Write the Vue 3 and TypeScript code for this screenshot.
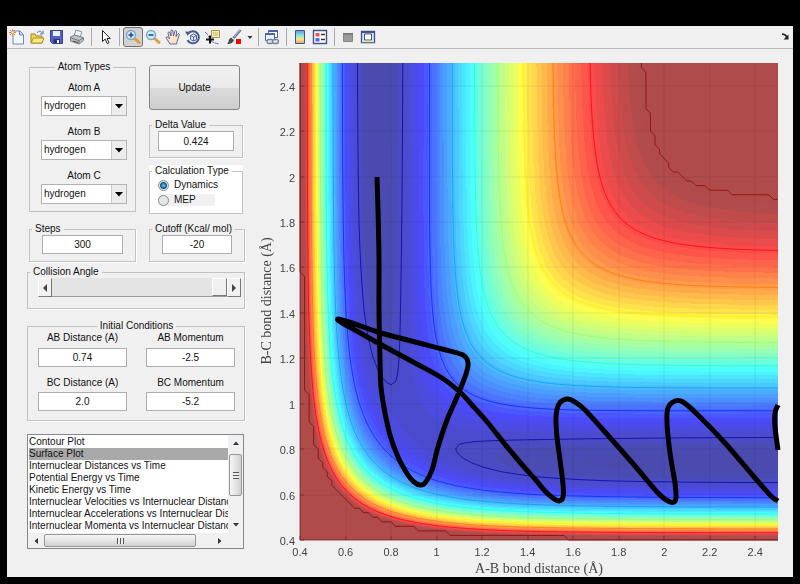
<script setup lang="ts">
import { computed, onMounted, ref } from 'vue'

type Point = [number, number]

const atoms = ref([
  { id: 'a', label: 'Atom A', value: 'hydrogen' },
  { id: 'b', label: 'Atom B', value: 'hydrogen' },
  { id: 'c', label: 'Atom C', value: 'hydrogen' },
])
const elements = ['hydrogen', 'deuterium', 'fluorine', 'chlorine']
const delta = ref('0.424')
const method = ref('dynamics')
const steps = ref('300')
const cutoff = ref('-20')
const angle = ref(180)
const initial = ref([
  { id: 'abd', label: 'AB Distance (A)', value: '0.74' },
  { id: 'abm', label: 'AB Momentum', value: '-2.5' },
  { id: 'bcd', label: 'BC Distance (A)', value: '2.0' },
  { id: 'bcm', label: 'BC Momentum', value: '-5.2' },
])
const plots = [
  'Contour Plot',
  'Surface Plot',
  'Internuclear Distances vs Time',
  'Potential Energy vs Time',
  'Kinetic Energy vs Time',
  'Internuclear Velocities vs Internuclear Distance',
  'Internuclear Accelerations vs Internuclear Distance',
  'Internuclear Momenta vs Internuclear Distance',
]
const plot = ref('Surface Plot')

// Collinear LEPS surface for H + H2, energies in kcal/mol
const DE = 109.5
const BETA = 1.96
const RE = 0.742
const SATO = 0.178
const LIMIT = -22

function pair(r: number): Point {
  const e = Math.exp(-BETA * (r - RE))
  const bonding = DE * (e * e - 2 * e)
  const anti = ((DE / 2) * (1 - SATO) * (e * e + 2 * e)) / (1 + SATO)
  return [(bonding + anti) / 2, (bonding - anti) / 2]
}
function energy(x: number, y: number): number {
  const [q1, j1] = pair(x)
  const [q2, j2] = pair(y)
  const [q3, j3] = pair(x + y)
  const ex = Math.sqrt(((j1 - j2) ** 2 + (j2 - j3) ** 2 + (j1 - j3) ** 2) / 2)
  return Math.min(LIMIT, q1 + q2 + q3 - ex)
}
function jet(v: number): number[] {
  const t = Math.min(0.985, Math.max(0.015, (v + DE) / (DE + LIMIT)))
  const ch = (c: number) => Math.min(1, Math.max(0, 1.5 - Math.abs(4 * t - c))) * 255
  return [ch(3), ch(2), ch(1)]
}

// Axes geometry inside the chart's view box
const LEFT = 44
const TOP = 14
const W = 478
const H = 477
const MIN = 0.4
const SPAN = 2.1
const px = (x: number) => LEFT + ((x - MIN) / SPAN) * W
const py = (y: number) => TOP + H - ((y - MIN) / SPAN) * H

const ticks = Array.from({ length: 11 }, (_, i) => Math.round((0.4 + i * 0.2) * 10) / 10)

const N = 105
const grid: number[][] = []
for (let j = 0; j <= N; j++) {
  const row: number[] = []
  for (let i = 0; i <= N; i++) row.push(energy(MIN + i * 0.02, MIN + j * 0.02))
  grid.push(row)
}

function contour(level: number): string {
  let d = ''
  for (let j = 0; j < N; j++) {
    for (let i = 0; i < N; i++) {
      const c: [number, number, number][] = [
        [i, j, grid[j][i]],
        [i + 1, j, grid[j][i + 1]],
        [i + 1, j + 1, grid[j + 1][i + 1]],
        [i, j + 1, grid[j + 1][i]],
      ]
      const hits: string[] = []
      for (let k = 0; k < 4; k++) {
        const a = c[k]
        const b = c[(k + 1) % 4]
        if (a[2] > level === b[2] > level) continue
        const t = (level - a[2]) / (b[2] - a[2])
        const x = px(MIN + (a[0] + t * (b[0] - a[0])) * 0.02)
        const y = py(MIN + (a[1] + t * (b[1] - a[1])) * 0.02)
        hits.push(x.toFixed(2) + ' ' + y.toFixed(2))
      }
      for (let k = 0; k + 1 < hits.length; k += 2) d += 'M' + hits[k] + 'L' + hits[k + 1]
    }
  }
  return d
}

const levels = [-105.3, -95.3, -84.9, -74.5, -64.1, -53.6, -43.2, -32.6, LIMIT - 0.001]
const contours = computed(() =>
  levels.map((v) => ({ d: contour(v), color: 'rgb(' + jet(v).map(Math.round).join(',') + ')' })),
)

const track: Point[] = [
  [121, 128], [122, 160], [123, 210], [123, 261], [124, 311], [125, 338], [129, 364], [134, 386],
  [142, 408], [152, 426], [158, 433], [164, 436], [169, 434], [176, 421], [182, 398], [191, 371],
  [201, 348], [210, 325], [212, 314], [207, 306], [186, 300], [159, 293], [122, 283], [96, 274],
  [82, 270], [86, 274], [99, 281], [122, 294], [159, 314], [186, 329], [204, 343], [216, 356],
  [232, 374], [252, 399], [269, 419], [279, 430], [289, 442], [297, 449], [303, 452], [307, 448],
  [307, 435], [304, 411], [301, 388], [300, 368], [303, 355], [311, 350], [319, 353], [329, 361],
  [349, 383], [379, 417], [402, 444], [412, 452], [418, 453], [420, 448], [419, 434], [414, 404],
  [411, 374], [412, 359], [419, 352], [427, 353], [442, 366], [469, 394], [499, 429], [515, 447],
  [522, 452],
]
const tail: Point[] = [[522, 356], [519, 364], [519, 378], [522, 401]]

function spline(p: Point[]): string {
  let d = 'M' + p[0].join(' ')
  for (let i = 0; i < p.length - 1; i++) {
    const a = p[Math.max(0, i - 1)]
    const b = p[i]
    const c = p[i + 1]
    const e = p[Math.min(p.length - 1, i + 2)]
    d += 'C' + [
      b[0] + (c[0] - a[0]) / 6, b[1] + (c[1] - a[1]) / 6,
      c[0] - (e[0] - b[0]) / 6, c[1] - (e[1] - b[1]) / 6,
      c[0], c[1],
    ].map((n) => n.toFixed(2)).join(' ')
  }
  return d
}
const trackPath = spline(track)
const tailPath = spline(tail)

const surface = ref<HTMLCanvasElement | null>(null)
onMounted(() => {
  const ctx = surface.value?.getContext('2d')
  if (!ctx) return
  const img = ctx.createImageData(W, H)
  const band = (DE + LIMIT) / 50
  for (let j = 0; j < H; j++) {
    for (let i = 0; i < W; i++) {
      const v = energy(MIN + (i / W) * SPAN, MIN + ((H - j) / H) * SPAN)
      const q = v >= LIMIT ? LIMIT : Math.floor(v / band) * band + band / 2
      const rgb = jet(q)
      const o = (j * W + i) * 4
      for (let k = 0; k < 3; k++) img.data[o + k] = 75 + 0.7 * rgb[k]
      img.data[o + 3] = 255
    }
  }
  ctx.putImageData(img, 0, 0)
})
</script>

<template>
  <main class="window">
    <div class="toolbar" role="toolbar">
      <button class="tool" aria-label="New figure">
        <svg viewBox="0 0 16 16"><path d="M4 2h7l3.500 3.500V15H4z" fill="#f4f8ff" stroke="#6f86b8" /><path d="M10.500 2v4h4" fill="#c5d5f2" stroke="#6f86b8" /><path d="M1 1l5 5M6 1L1 6M3.500 0v7M0 3.500h7" stroke="#ee7d45" /><circle cx="3.500" cy="3.500" r="1.300" fill="#ffe9a0" /></svg>
      </button>
      <button class="tool" aria-label="Open file">
        <svg viewBox="0 0 16 16"><path d="M2 14V5h4l1 2h6v7z" fill="#f5d560" stroke="#a9851d" /><path d="M2 14l2.500-5H15l-2 5z" fill="#ffeb8c" stroke="#b18d20" /><path d="M8 4c1-2 4-2.500 5 0M14 1.500V5h-3" fill="none" stroke="#5277ad" /></svg>
      </button>
      <button class="tool" aria-label="Save figure">
        <svg viewBox="0 0 16 16"><path d="M1.500 1.500h12v13h-10l-2-2z" fill="#5260c4" stroke="#34409a" /><path d="M4 2h7v5H4z" fill="#e8eeff" /><path d="M4.500 10h6.500v4H4.500z" fill="#26307c" /><path d="M8 11h2v3H8z" fill="#fff" /></svg>
      </button>
      <button class="tool" aria-label="Print figure">
        <svg viewBox="0 0 16 16"><path d="M5 7l2-6 6 2-2 5z" fill="#eef6fc" stroke="#8297a7" /><path d="M1.500 8l4-2 9 2.500v3L10 15l-8.500-3z" fill="#bfc2c6" stroke="#7a7d80" /><path d="M2 9l8 2.500 4-2.500M10 11.500V15" fill="none" stroke="#777" /><path d="M4 12l5 1.500" stroke="#444" /></svg>
      </button>
      <i class="sep"></i>
      <button class="tool" aria-label="Edit plot">
        <svg viewBox="0 0 16 16"><path d="M5.500 1.500v11l2.700-2.400 2 4.400 1.800-.8-2-4.200h3.300z" fill="#fff" stroke="#222" /></svg>
      </button>
      <i class="sep"></i>
      <button class="tool pressed" aria-label="Zoom in" aria-pressed="true">
        <svg viewBox="0 0 16 16"><path d="M9 9l5 4.500" stroke="#e49b3e" stroke-width="3" stroke-linecap="round" /><circle cx="6" cy="6" r="4.500" fill="#cceefa" stroke="#81a9c8" stroke-width="1.500" /><path d="M3.500 6h5M6 3.500v5" stroke="#20459d" stroke-width="1.600" /></svg>
      </button>
      <button class="tool" aria-label="Zoom out">
        <svg viewBox="0 0 16 16"><path d="M9 9l5 4.500" stroke="#e49b3e" stroke-width="3" stroke-linecap="round" /><circle cx="6" cy="6" r="4.500" fill="#cceefa" stroke="#81a9c8" stroke-width="1.500" /><path d="M3.500 6h5" stroke="#20459d" stroke-width="1.600" /></svg>
      </button>
      <button class="tool" aria-label="Pan">
        <svg viewBox="0 0 16 16"><path d="M5 15L1.500 9.500C.5 8 2 7.200 3 8.300l1.500 1.500L3 4.500c-.4-1.500 1.400-2 1.900-.6L6 7 5.900 2c0-1.500 1.900-1.500 2 0L8.500 7l1.200-4.600c.4-1.400 2.100-1 1.900.5L11 7.600l1.600-2.400c.8-1.100 2.300-.3 1.700 1L12.500 11 11.500 15z" fill="#ffe3c4" stroke="#49589c" stroke-width=".9" /></svg>
      </button>
      <button class="tool" aria-label="Rotate 3D">
        <svg viewBox="0 0 16 16"><path d="M3.200 4.500A6 6 0 1 1 2.500 11" fill="none" stroke="#465a8c" stroke-width="2" /><path d="M0 2.500l6 .2-3.500 4z" fill="#465a8c" /><path d="M5.500 6.500L8.500 5l3 1.500v4L8.500 12l-3-1.500zM5.500 6.500l3 1.500 3-1.500M8.500 8v4" fill="#dce5f8" stroke="#536ba0" /></svg>
      </button>
      <button class="tool" aria-label="Data cursor">
        <svg viewBox="0 0 16 16"><path d="M0 3c3 2 4 6 6 9 3 2 5 2 8 3" fill="none" stroke="#5b55e8" stroke-dasharray="4 1" /><path d="M6.500 1.500h8v7h-8z" fill="#f4edaa" stroke="#a39a51" /><path d="M8 4h5M8 6h5" stroke="#c3b974" /><path d="M1 10.500h8M5 6.500v8" stroke="#111" stroke-width="2" /></svg>
      </button>
      <button class="tool brush" aria-label="Brush data">
        <svg viewBox="0 0 16 16"><path d="M14.500 1L7.500 9" stroke="#5c6796" stroke-width="2.600" /><path d="M14 1L8 8" stroke="#c7cfee" /><path d="M1 15c2-1 1-5 4-6.500l3 2.500c-1 3-4 4.500-7 4z" fill="#4a4a4c" /><path d="M10 10h5v5h-5z" fill="#f00" /></svg>
      </button>
      <button class="tool caret" aria-label="Brush colors">
        <svg viewBox="0 0 9 16"><path d="M2.500 7h5L5 10z" fill="#333" /></svg>
      </button>
      <i class="sep"></i>
      <button class="tool" aria-label="Link plot">
        <svg viewBox="0 0 16 16"><path d="M4.500 1.500h9v7h-9z" fill="#fff" stroke="#526796" /><path d="M1.500 4.500h9v7h-9z" fill="#edf3fd" stroke="#526796" /><path d="M1.500 5h9M4.500 2h9" stroke="#4865a5" stroke-width="2" /><rect x="3" y="10.500" width="6" height="4" rx="2" fill="#e2e6ec" stroke="#738295" stroke-width="1.300" /><rect x="8.500" y="10.500" width="6" height="4" rx="2" fill="#e2e6ec" stroke="#738295" stroke-width="1.300" /></svg>
      </button>
      <i class="sep"></i>
      <button class="tool" aria-label="Insert colorbar">
        <svg viewBox="0 0 16 16"><defs><linearGradient id="bar" x2="0" y2="1"><stop stop-color="#6d91e8" /><stop offset=".35" stop-color="#80e0e0" /><stop offset=".65" stop-color="#eee88a" /><stop offset="1" stop-color="#ef9d78" /></linearGradient></defs><path d="M3.500 1.500h9v13h-9z" fill="url(#bar)" stroke="#3f5488" /></svg>
      </button>
      <button class="tool" aria-label="Insert legend">
        <svg viewBox="0 0 16 16"><path d="M1.500 1.500h13v13h-13z" fill="#fff" stroke="#3f5488" stroke-width="1.400" /><path d="M3.500 4h4v3.500h-4z" fill="#ee5555" /><path d="M3.500 9h4v3.500h-4z" fill="#5964e4" /><path d="M9 5.500h4M9 10.500h4" stroke="#333" stroke-width="1.300" /></svg>
      </button>
      <i class="sep"></i>
      <button class="tool" aria-label="Hide plot tools">
        <svg viewBox="0 0 16 16"><path d="M3.500 4.500h9v8h-9z" fill="#9a9a9a" stroke="#858585" /><path d="M3 5h10" stroke="#777" stroke-width="1.500" /></svg>
      </button>
      <button class="tool" aria-label="Show plot tools">
        <svg viewBox="0 0 16 16"><path d="M1.500 2.500h13v11h-13z" fill="#d9e0ef" stroke="#3f5488" stroke-width="1.300" /><path d="M1 3h14" stroke="#3f5488" stroke-width="2" /><path d="M4.500 5h7v6h-7z" fill="#fff" stroke="#3f5488" /><path d="M2 12.500h12" stroke="#eee3ad" stroke-width="1.400" /></svg>
      </button>
      <button class="tool dock" aria-label="Dock figure">
        <svg viewBox="0 0 16 16"><path d="M5 5q3 0 5 3" fill="none" stroke="#222" stroke-width="1.500" /><path d="M11.500 5.500v5h-5z" fill="#222" /></svg>
      </button>
    </div>

    <div class="content">
      <form class="panel" @submit.prevent>
        <div class="columns">
          <fieldset class="group atoms">
            <legend class="center">Atom Types</legend>
            <div v-for="a in atoms" :key="a.id" class="atom">
              <label :for="'atom-' + a.id">{{ a.label }}</label>
              <div class="combo">
                <select :id="'atom-' + a.id" v-model="a.value">
                  <option v-for="e in elements" :key="e">{{ e }}</option>
                </select>
                <span class="drop"><svg viewBox="0 0 14 16"><path d="M3 6h8l-4 4.500z" fill="#000" /></svg></span>
              </div>
            </div>
          </fieldset>
          <div class="side">
            <button class="update">Update</button>
            <fieldset class="group delta">
              <legend><label for="delta">Delta Value</label></legend>
              <input id="delta" v-model="delta" class="field" />
            </fieldset>
            <fieldset class="group method">
              <legend>Calculation Type</legend>
              <label class="radio"><input v-model="method" type="radio" name="method" value="dynamics" />Dynamics</label>
              <label class="radio muted"><input v-model="method" type="radio" name="method" value="mep" />MEP</label>
            </fieldset>
          </div>
        </div>

        <div class="columns settings">
          <fieldset class="group small">
            <legend><label for="steps">Steps</label></legend>
            <input id="steps" v-model="steps" class="field" />
          </fieldset>
          <fieldset class="group small">
            <legend><label for="cutoff">Cutoff (Kcal/ mol)</label></legend>
            <input id="cutoff" v-model="cutoff" class="field" />
          </fieldset>
        </div>

        <fieldset class="group collision">
          <legend><label for="angle">Collision Angle</label></legend>
          <div class="slider">
            <button type="button" aria-label="Decrease angle" @click="angle--"><svg viewBox="0 0 8 10"><path d="M6 1v8L2 5z" fill="#444" /></svg></button>
            <input id="angle" v-model.number="angle" type="range" min="0" max="180" />
            <button type="button" aria-label="Increase angle" @click="angle++"><svg viewBox="0 0 8 10"><path d="M2 1v8l4-4z" fill="#444" /></svg></button>
          </div>
        </fieldset>

        <fieldset class="group initial">
          <legend class="center">Initial Conditions</legend>
          <div v-for="f in initial" :key="f.id" class="cell">
            <label :for="f.id">{{ f.label }}</label>
            <input :id="f.id" v-model="f.value" class="field" />
          </div>
        </fieldset>

        <div class="list">
          <select v-model="plot" size="8" aria-label="Plot type">
            <option v-for="p in plots" :key="p">{{ p }}</option>
          </select>
          <div class="bar vertical">
            <button type="button" aria-label="Scroll up"><svg viewBox="0 0 8 6"><path d="M1 5h6L4 1.500z" fill="#333" /></svg></button>
            <span class="thumb"><i></i></span>
            <button type="button" aria-label="Scroll down"><svg viewBox="0 0 8 6"><path d="M1 1h6L4 4.500z" fill="#333" /></svg></button>
          </div>
          <div class="bar horizontal">
            <button type="button" aria-label="Scroll left"><svg viewBox="0 0 6 8"><path d="M5 1v6L1.500 4z" fill="#333" /></svg></button>
            <span class="thumb"><i></i></span>
            <button type="button" aria-label="Scroll right"><svg viewBox="0 0 6 8"><path d="M1 1v6l3.500-3z" fill="#333" /></svg></button>
          </div>
        </div>
      </form>

      <svg class="chart" viewBox="0 0 537 528" role="img" aria-label="Potential energy surface">
        <foreignObject :x="LEFT" :y="TOP" :width="W" :height="H">
          <canvas ref="surface" class="surface" :width="W" :height="H"></canvas>
        </foreignObject>
        <g class="lines">
          <path v-for="(c, i) in contours" :key="i" :d="c.d" :stroke="c.color" />
        </g>
        <g class="grid">
          <path v-for="t in ticks" :key="t" :d="`M${Math.round(px(t))} ${TOP}v${H}M${LEFT} ${Math.round(py(t))}h${W}`" />
        </g>
        <g class="marks">
          <path v-for="t in ticks" :key="t" :d="`M${Math.round(px(t))} ${TOP + H}v-4M${LEFT} ${Math.round(py(t))}h4`" />
          <path :d="`M${LEFT} ${TOP}v${H}h${W}`" />
        </g>
        <g class="track">
          <path :d="trackPath" />
          <path :d="tailPath" />
        </g>
        <g class="xticks">
          <text v-for="t in ticks" :key="t" :x="px(t)" y="507">{{ t }}</text>
        </g>
        <g class="yticks">
          <text v-for="t in ticks" :key="t" x="39" :y="py(t) + 5">{{ t }}</text>
        </g>
        <text class="axis" x="283" y="524">A-B bond distance (Å)</text>
        <text class="axis" transform="translate(15 252) rotate(-90)">B-C bond distance (Å)</text>
      </svg>
    </div>
  </main>
</template>

<style>
body {
  margin: 0;
  background: #000;
}
</style>

<style scoped>
.window {
  margin: 26px 7px 7px;
  background: #f0f0f0;
  font: 10px/12px "Liberation Sans", Arial, sans-serif;
  color: #111;
}
button,
input,
select {
  font: inherit;
  color: inherit;
  margin: 0;
  padding: 0;
  box-sizing: border-box;
}
.toolbar {
  display: flex;
  align-items: center;
  height: 22px;
  border-bottom: 1px solid #b8b8b8;
}
.tool {
  display: grid;
  place-items: center;
  width: 20px;
  height: 20px;
  border: 0;
  background: none;
}
.tool svg {
  width: 16px;
  height: 16px;
}
.pressed {
  border: 1px solid #707070;
  border-radius: 3px;
  background: #d2d2d2;
}
.brush {
  width: 22px;
}
.caret,
.caret svg {
  width: 9px;
}
.dock {
  margin-left: auto;
  width: 16px;
}
.sep {
  width: 1px;
  height: 18px;
  margin: 0 3px 0 4px;
  background: #aaa;
}
.content {
  display: flex;
  align-items: flex-start;
}
.panel {
  box-sizing: border-box;
  flex: 0 0 249px;
  min-width: 0;
  padding: 12px 11px 0 20px;
}
.columns {
  display: grid;
  grid-template-columns: 109px minmax(0, 1fr);
  gap: 13px;
}
.group {
  margin: 0;
  min-width: 0;
  padding: 0 8px;
  box-sizing: border-box;
  border: 1px solid #c2c2c2;
  box-shadow: 1px 1px #fff;
}
legend {
  padding: 0 3px;
  margin-left: -6px;
  white-space: nowrap;
}
legend.center {
  margin: 0 auto;
}
.atoms {
  margin-left: 2px;
  height: 151px;
  padding: 9px 8px 0 11px;
  box-shadow: none;
}
.atom {
  display: flex;
  flex-direction: column;
  gap: 2px;
  margin-bottom: 10px;
  text-align: center;
}
.combo {
  display: grid;
  grid-template-columns: 1fr 15px;
  height: 20px;
  box-sizing: border-box;
  border: 1px solid #b2b2b2;
  background: #fff;
}
.combo select {
  grid-area: 1 / 1 / 2 / 3;
  appearance: none;
  border: 0;
  background: none;
  padding-left: 2px;
}
.drop {
  grid-area: 1 / 2;
  display: grid;
  place-items: center;
  pointer-events: none;
  border-left: 1px solid #ccc;
  background: #ececec;
}
.drop svg {
  width: 14px;
  height: 16px;
}
.side {
  display: flex;
  flex-direction: column;
  padding-top: 4px;
}
.update {
  height: 45px;
  margin-right: 5px;
  margin-bottom: 9px;
  border: 1px solid #858585;
  border-radius: 3px;
  background: linear-gradient(#f2f2f2, #e9e9e9 50%, #dcdcdc 51%, #cecece);
}
.delta {
  height: 39px;
  margin-right: 2px;
}
.field {
  display: block;
  width: 100%;
  height: 20px;
  border: 1px solid #abadb3;
  background: #fff;
  text-align: center;
}
.method {
  height: 49px;
  margin: 7px 2px 0 0;
  background: #fff;
  padding: 1px 8px 0;
  box-shadow: 0 -6px #fff;
}
.radio {
  display: flex;
  align-items: center;
  gap: 5px;
  height: 14px;
  margin-bottom: 2px;
}
.radio.muted {
  height: 12px;
  width: 57px;
  background: #f0f0f0;
}
.radio input {
  appearance: none;
  width: 11px;
  height: 11px;
  border: 1px solid #8a8f94;
  border-radius: 50%;
  background: #e4e6e8;
}
.radio input:checked {
  background: radial-gradient(circle, #67cdf0 0, #15567f 3px, #d9e4ea 4px);
}
.settings {
  margin-top: 9px;
}
.small {
  height: 39px;
  padding: 0 12px;
}
.small:first-child {
  margin-left: 2px;
}
.small .field {
  height: 19px;
}
.small legend {
  margin-left: -10px;
}
.collision {
  height: 43px;
  margin-top: 4px;
  padding: 0 3px 0 10px;
}
.collision legend {
  margin-left: -8px;
}
.slider {
  display: flex;
  height: 19px;
}
.slider button {
  flex: 0 0 14px;
  display: grid;
  place-items: center;
  border: 1px solid;
  border-color: #fff #777 #777 #fff;
  background: #f0f0f0;
}
.slider button svg {
  width: 8px;
  height: 10px;
}
.slider input {
  appearance: none;
  flex: 1;
  min-width: 0;
  height: 19px;
  background: #e4e4e4;
  border-bottom: 1px solid #999;
}
.slider input::-webkit-slider-thumb {
  appearance: none;
  width: 15px;
  height: 18px;
  box-sizing: border-box;
  border: 1px solid;
  border-color: #fff #777 #777 #fff;
  background: #f0f0f0;
}
.initial {
  display: grid;
  grid-template-columns: 1fr 1fr;
  gap: 10px 19px;
  height: 101px;
  margin-top: 11px;
  padding: 0 9px 9px 10px;
}
.cell {
  display: flex;
  flex-direction: column;
  justify-content: space-between;
  text-align: center;
}
.cell .field {
  height: 19px;
}
.list {
  display: grid;
  grid-template-columns: minmax(0, 1fr) 15px;
  grid-template-rows: 98px 15px;
  margin-top: 13px;
  margin-right: 1px;
  border: 1px solid #828790;
  background: #f0f0f0;
}
.list select {
  appearance: none;
  min-width: 0;
  width: 100%;
  height: 98px;
  border: 0;
  border-radius: 0;
  outline: 0;
  overflow: hidden;
  background: #fff;
  padding: 1px 0 0 1px;
}
.list option {
  padding: 0;
  height: 12px;
  min-height: 12px;
  color: #111;
}
.list option:checked {
  background: #a9a9a9 linear-gradient(#a9a9a9, #a9a9a9);
}
.bar {
  display: flex;
  align-items: center;
}
.bar button {
  display: grid;
  place-items: center;
  border: 0;
  background: none;
}
.bar svg {
  width: 8px;
  height: 8px;
}
.vertical {
  flex-direction: column;
}
.vertical button {
  width: 15px;
  height: 16px;
}
.vertical .thumb {
  width: 13px;
  height: 42px;
  margin: 3px 0 auto;
}
.horizontal button {
  width: 16px;
  height: 15px;
}
.horizontal .thumb {
  width: 152px;
  height: 13px;
  margin-right: auto;
}
.thumb {
  display: grid;
  place-items: center;
  box-sizing: border-box;
  border: 1px solid #979797;
  border-radius: 2px;
}
.vertical .thumb {
  background: linear-gradient(90deg, #f5f5f5, #e6e6e6 50%, #cfcfcf);
}
.horizontal .thumb {
  background: linear-gradient(#f5f5f5, #e6e6e6 50%, #cfcfcf);
}
.vertical i {
  width: 6px;
  height: 7px;
  background: repeating-linear-gradient(#555 0 1px, #eee 1px 3px);
}
.horizontal i {
  width: 7px;
  height: 6px;
  background: repeating-linear-gradient(90deg, #555 0 1px, #eee 1px 3px);
}
.chart {
  flex: 1;
  min-width: 0;
  display: block;
}
.surface {
  display: block;
  width: 100%;
  height: 100%;
}
.lines path {
  fill: none;
  stroke-width: 1;
  opacity: 0.75;
}
.grid path {
  stroke: #000;
  stroke-opacity: 0.07;
}
.marks path {
  fill: none;
  stroke: #701c1c;
  stroke-opacity: 0.7;
}
.track path {
  fill: none;
  stroke: #000;
  stroke-width: 5;
  stroke-linejoin: round;
}
.chart text {
  fill: #444;
  font-size: 11px;
}
.xticks text,
.chart .axis {
  text-anchor: middle;
}
.yticks text {
  text-anchor: end;
}
.chart .axis {
  font-family: "Liberation Serif", serif;
  font-size: 14px;
}
</style>
